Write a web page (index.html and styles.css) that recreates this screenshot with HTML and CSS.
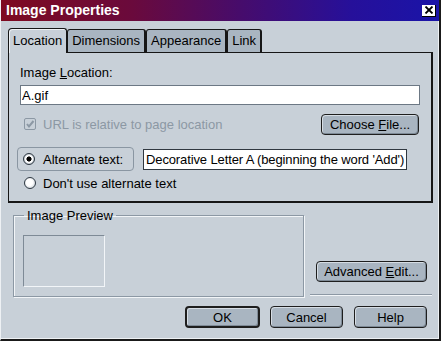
FILE: index.html
```html
<!DOCTYPE html>
<html>
<head>
    <title>Image Properties</title>
    <link rel="stylesheet" href="styles.css">
</head>
<body>
    <div class="window">
        <div class="titlebar">
            <span class="title">Image Properties</span>
            <span class="close">
                <svg width="10" height="8" viewBox="0 0 10 8"><path d="M1.5 0.5 L8.5 7.5 M8.5 0.5 L1.5 7.5" stroke="#000" stroke-width="1.8" fill="none"/></svg>
            </span>
        </div>
        <div class="tabs">
            <div class="tab active">Location</div>
            <div class="tab">Dimensions</div>
            <div class="tab">Appearance</div>
            <div class="tab">Link</div>
        </div>
        <div class="panel">
            <label class="field-label" for="location">Image <u>L</u>ocation:</label>
            <input class="text-input" id="location" type="text" value="A.gif">
            <div class="row check-row">
                <span class="checkbox">
                    <svg width="10" height="10" viewBox="0 0 10 10"><path d="M2 5 L4 7.5 L8.5 2" stroke="#8c98a4" stroke-width="2" fill="none"/></svg>
                </span>
                <span class="disabled-text">URL is relative to page location</span>
                <button class="button choose">Choose <u>F</u>ile...</button>
            </div>
            <div class="row alt-row">
                <div class="alt-box">
                    <span class="radio checked"></span>
                    <span>Alternate text:</span>
                </div>
                <input class="text-input alt-input" type="text" value="Decorative Letter A (beginning the word 'Add')">
            </div>
            <div class="row none-row">
                <span class="radio"></span>
                <span>Don't use alternate text</span>
            </div>
        </div>
        <div class="middle">
            <fieldset class="preview">
                <legend>Image Preview</legend>
                <div class="preview-box"></div>
            </fieldset>
            <div class="side">
                <button class="button advanced">Advanced <u>E</u>dit...</button>
                <div class="etched-line"></div>
            </div>
        </div>
        <div class="actions">
            <button class="button default">OK</button>
            <button class="button cancel">Cancel</button>
            <button class="button help">Help</button>
        </div>
    </div>
</body>
</html>
```

FILE: styles.css
```css
body {
    margin: 0;
    font-family: "Liberation Sans", Arial, sans-serif;
    font-size: 13px;
    color: #000;
}
.window {
    width: 441px;
    height: 341px;
    box-sizing: border-box;
    background-color: #c8d0d8;
    border-left: 1px solid #eef1f4;
    border-right: 2px solid #1a1a1a;
    border-bottom: 2px solid #1a1a1a;
    box-shadow: inset -1px -1px 0 #eef1f4;
}
.titlebar {
    display: flex;
    align-items: center;
    height: 21px;
    background: linear-gradient(to right, #7e0a20 0%, #6a0a3c 30%, #460c6c 55%, #26109a 80%, #1a14a8 100%);
    color: #fff;
}
.title {
    padding-left: 5px;
    font-weight: bold;
    font-size: 14px;
    line-height: 21px;
}
.close {
    display: flex;
    align-items: center;
    justify-content: center;
    width: 14px;
    height: 12px;
    box-sizing: border-box;
    margin-left: auto;
    margin-right: 3px;
    background-color: #fff;
    border-right: 1px solid #000;
    border-bottom: 1px solid #000;
}
.tabs {
    display: flex;
    align-items: flex-end;
    height: 24px;
    margin-top: 7px;
    padding-left: 7px;
}
.tab {
    position: relative;
    height: 23px;
    box-sizing: border-box;
    padding: 0 4px;
    line-height: 22px;
    background-color: #a9b5c1;
    border: 1px solid #161616;
    border-bottom: none;
    border-right-width: 2px;
    border-radius: 3px 3px 0 0;
}
.tab.active {
    height: 25px;
    margin-bottom: -1px;
    line-height: 23px;
    background-color: #c8d0d8;
    border-right-width: 1px;
    border-radius: 4px 3px 0 0;
    box-shadow: inset 1px 1px 0 #eef1f4;
    z-index: 1;
}
.panel {
    width: 425px;
    height: 151px;
    box-sizing: border-box;
    margin-left: 7px;
    padding: 0 11px;
    border: 1px solid #161616;
    border-right-width: 2px;
    border-bottom-width: 2px;
}
.field-label {
    display: block;
    margin-top: 12px;
    line-height: 15px;
}
.text-input {
    display: block;
    width: 400px;
    height: 20px;
    box-sizing: border-box;
    margin: 5px 0 0 0;
    padding: 0 1px;
    font-family: inherit;
    font-size: 13px;
    color: #000;
    background-color: #fff;
    border: 1px solid #6c7884;
    outline: none;
}
.row {
    display: flex;
    align-items: center;
}
.check-row {
    height: 22px;
    margin-top: 8px;
}
.checkbox {
    display: flex;
    align-items: center;
    justify-content: center;
    width: 12px;
    height: 12px;
    box-sizing: border-box;
    margin-left: 4px;
    margin-right: 7px;
    border: 1px solid #8c98a4;
    border-radius: 2px;
}
.disabled-text {
    color: #8c98a4;
}
.button {
    height: 21px;
    box-sizing: border-box;
    padding: 0;
    font-family: inherit;
    font-size: 13px;
    color: #000;
    background-color: #a9b5c1;
    border: 1px solid #1e1e1e;
    border-radius: 4px;
    box-shadow: inset 1px 1px 0 #d6dde4, inset -1px -1px 0 #7e8a96;
}
.choose {
    width: 98px;
    margin-left: auto;
    margin-right: 1px;
}
.alt-row {
    height: 24px;
    margin-top: 12px;
}
.alt-box {
    display: flex;
    align-items: center;
    width: 117px;
    height: 24px;
    box-sizing: border-box;
    margin-left: -3px;
    padding-left: 5px;
    border: 1px solid #8a96a2;
    border-radius: 4px;
}
.radio {
    width: 12px;
    height: 12px;
    box-sizing: border-box;
    margin-right: 8px;
    border: 1px solid #2e3842;
    border-radius: 50%;
    background: radial-gradient(circle at 45% 45%, #fff 0, #fff 40%, #b6c0ca 100%);
}
.radio.checked {
    background: radial-gradient(circle, #000 0, #000 2.3px, #fff 2.8px, #fff 3.5px, #c0c8d0 5px);
}
.alt-input {
    width: 264px;
    height: 21px;
    margin: 0 0 0 9px;
    padding: 0 0 0 2px;
    letter-spacing: -0.12px;
    border-color: #303840;
}
.none-row {
    height: 14px;
    margin-top: 5px;
}
.none-row .radio {
    margin-left: 4px;
    margin-right: 7px;
}
.middle {
    display: flex;
    margin-top: 5px;
}
.preview {
    width: 291px;
    height: 89px;
    box-sizing: border-box;
    margin: 0 0 0 12px;
    padding: 12px 9px 0 9px;
    border: 1px solid #8c98a4;
    box-shadow: 1px 1px 0 #f2f5f8, inset 1px 1px 0 #f2f5f8;
}
.preview legend {
    margin-left: 1px;
    padding: 0 3px;
    line-height: 15px;
}
.preview-box {
    width: 82px;
    height: 52px;
    box-sizing: border-box;
    border-top: 1px solid #7e8a96;
    border-left: 1px solid #7e8a96;
    border-right: 1px solid #f2f5f8;
    border-bottom: 1px solid #f2f5f8;
}
.side {
    display: flex;
    flex-direction: column;
    justify-content: flex-end;
    align-items: flex-end;
    width: 122px;
    height: 89px;
    margin-left: 6px;
    padding-bottom: 1px;
    box-sizing: border-box;
}
.advanced {
    width: 111px;
    margin-right: 5px;
}
.etched-line {
    width: 122px;
    margin-top: 12px;
    border-top: 1px solid #8c98a4;
    border-bottom: 1px solid #f2f5f8;
}
.actions {
    display: flex;
    justify-content: flex-end;
    margin-top: 9px;
    padding-right: 12px;
}
.actions .button {
    width: 73px;
    height: 22px;
}
.actions .default {
    width: 75px;
    border-width: 2px;
}
.actions .cancel {
    margin-left: 10px;
}
.actions .help {
    margin-left: 11px;
}
```
